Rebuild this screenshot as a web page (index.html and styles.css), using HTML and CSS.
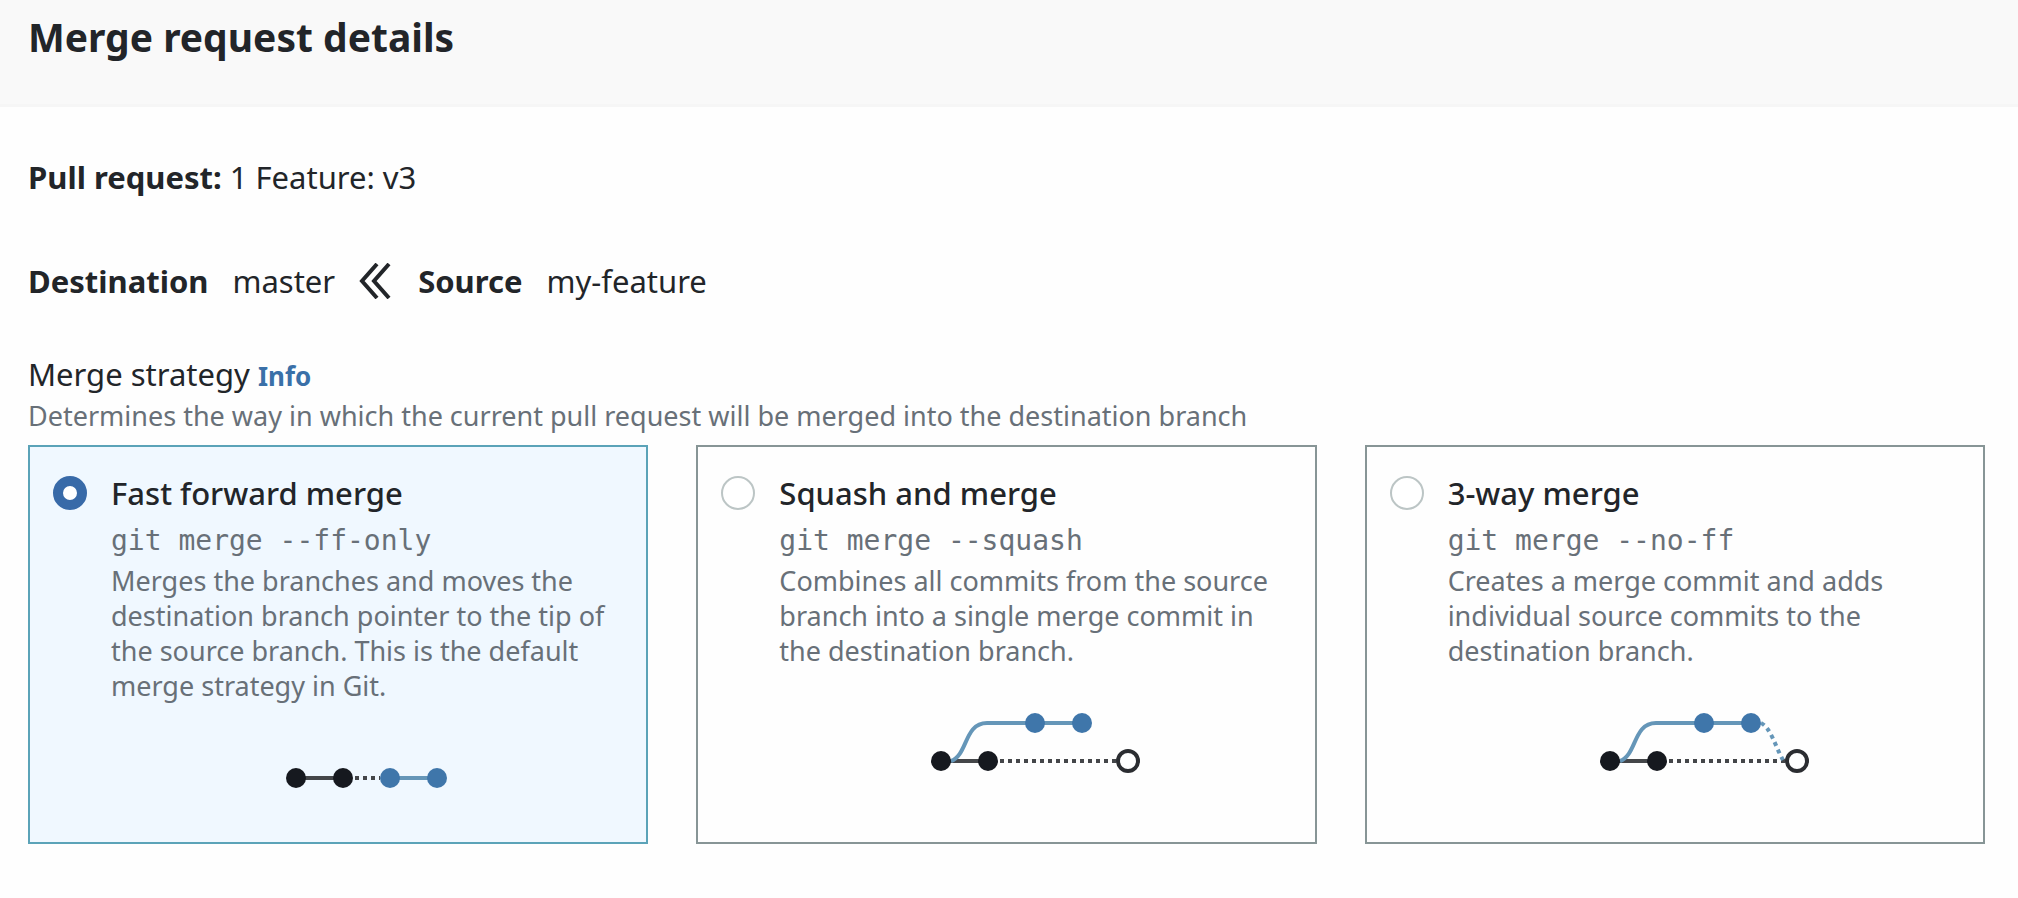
FILE: index.html
```html
<!DOCTYPE html>
<html lang="en">
<head>
<meta charset="utf-8">
<title>Merge request details</title>
<link rel="stylesheet" href="styles.css">
</head>
<body>
<header class="header">
  <h1 class="title">Merge request details</h1>
</header>
<main class="content">
  <p class="pull-request"><strong>Pull request:</strong> 1 Feature: v3</p>
  <div class="branches">
    <strong>Destination</strong>
    <span>master</span>
    <svg class="chevrons" viewBox="0 0 32 36" aria-hidden="true">
      <path d="M18 1 3 18 18 35M30 1 15 18 30 35"/>
    </svg>
    <strong>Source</strong>
    <span>my-feature</span>
  </div>
  <fieldset class="strategy">
    <legend class="legend">Merge strategy <a class="info" href="#">Info</a></legend>
    <p class="hint">Determines the way in which the current pull request will be merged into the destination branch</p>
    <div class="cards">
      <label class="card selected">
        <input class="radio" type="radio" name="strategy" checked>
        <span class="body">
          <span class="name">Fast forward merge</span>
          <code class="command">git merge --ff-only</code>
          <span class="text">Merges the branches and moves the destination branch pointer to the tip of the source branch. This is the default merge strategy in Git.</span>
          <svg class="graph" viewBox="0 0 164 60" width="164" height="60" aria-hidden="true">
            <path class="line dark" d="M11 30H58"/>
            <path class="line dark dotted" d="M70 30H95"/>
            <path class="line blue" d="M105 30H152"/>
            <circle class="dot" cx="11" cy="30" r="10"/>
            <circle class="dot" cx="58" cy="30" r="10"/>
            <circle class="dot blue-dot" cx="105" cy="30" r="10"/>
            <circle class="dot blue-dot" cx="152" cy="30" r="10"/>
          </svg>
        </span>
      </label>
      <label class="card">
        <input class="radio" type="radio" name="strategy">
        <span class="body">
          <span class="name">Squash and merge</span>
          <code class="command">git merge --squash</code>
          <span class="text">Combines all commits from the source branch into a single merge commit in the destination branch.</span>
          <svg class="graph" viewBox="0 0 210 60" width="210" height="60" aria-hidden="true">
            <path class="line dark" d="M11 48H58"/>
            <path class="line dark dotted" d="M70 48H188"/>
            <path class="line blue" d="M21 48C38 42 34 10 57 10H152"/>
            <circle class="dot" cx="11" cy="48" r="10"/>
            <circle class="dot" cx="58" cy="48" r="10"/>
            <circle class="dot blue-dot" cx="105" cy="10" r="10"/>
            <circle class="dot blue-dot" cx="152" cy="10" r="10"/>
            <circle class="ring" cx="198" cy="48" r="10"/>
          </svg>
        </span>
      </label>
      <label class="card">
        <input class="radio" type="radio" name="strategy">
        <span class="body">
          <span class="name">3-way merge</span>
          <code class="command">git merge --no-ff</code>
          <span class="text">Creates a merge commit and adds individual source commits to the destination branch.</span>
          <svg class="graph" viewBox="0 0 210 60" width="210" height="60" aria-hidden="true">
            <path class="line dark" d="M11 48H58"/>
            <path class="line dark dotted" d="M70 48H186"/>
            <path class="line blue" d="M21 48C38 42 34 10 57 10H152"/>
            <path class="line blue dotted" d="M162 10C172 15 176 33 184 47"/>
            <circle class="dot" cx="11" cy="48" r="10"/>
            <circle class="dot" cx="58" cy="48" r="10"/>
            <circle class="dot blue-dot" cx="105" cy="10" r="10"/>
            <circle class="dot blue-dot" cx="152" cy="10" r="10"/>
            <circle class="ring" cx="198" cy="48" r="10"/>
          </svg>
        </span>
      </label>
    </div>
  </fieldset>
</main>
</body>
</html>
```

FILE: styles.css
```css
* {
  box-sizing: border-box;
}

body {
  margin: 0;
  background: #fefefe;
  color: #222529;
  font: 31px/40px "Noto Sans", "Open Sans", sans-serif;
}

.header {
  padding: 13px 28px 43px;
  background: #f9f9f9;
  border-bottom: 3px solid #f6f6f6;
}

.title {
  margin: 0;
  font-size: 39px;
  line-height: 48px;
}

.content {
  padding: 50px 33px 48px 28px;
}

.pull-request {
  margin: 0 0 64px;
}

.branches {
  display: flex;
  align-items: center;
  gap: 24px;
  margin-bottom: 53px;
}

.chevrons {
  width: 32px;
  height: 36px;
  margin-right: 3px;
  fill: none;
  stroke: #222529;
  stroke-width: 4;
}

.strategy {
  min-width: 0;
  margin: 0;
  padding: 0;
  border: 0;
}

.legend {
  padding: 0;
}

.info {
  color: #3a70a8;
  font-size: 26px;
  font-weight: 700;
  text-decoration: none;
}

.hint {
  margin: 2px 0 12px;
}

.hint,
.text {
  color: #687078;
  font-size: 27px;
  line-height: 35px;
}

.cards {
  display: grid;
  grid-template-columns: repeat(3, minmax(0, 1fr));
  gap: 48px;
}

.card {
  display: flex;
  gap: 24px;
  padding: 26px 23px 34px;
  border: 2px solid #879596;
}

.selected {
  border-color: #5ba3b8;
  background: #f0f8ff;
}

.radio {
  appearance: none;
  flex: none;
  width: 34px;
  height: 34px;
  margin: 3px 0 0;
  border: 2px solid #bcc5c5;
  border-radius: 50%;
  background: #fff;
}

.radio:checked {
  border: 10px solid #386aa8;
}

.body {
  display: flex;
  flex: 1;
  flex-direction: column;
  min-width: 0;
}

.name {
  font-weight: 500;
}

.command {
  margin: 8px 0 2px;
  color: #687078;
  font: 28px/40px "DejaVu Sans Mono", monospace;
}

.text {
  margin-bottom: 45px;
}

.graph {
  align-self: center;
  overflow: visible;
}

.line {
  fill: none;
  stroke-width: 4;
}

.dark {
  stroke: #444649;
}

.blue {
  stroke: #6596b8;
}

.dotted {
  stroke-dasharray: 4 4;
}

.dot {
  fill: #16191f;
}

.blue-dot {
  fill: #3f76aa;
}

.ring {
  fill: #fff;
  stroke: #2b2d31;
  stroke-width: 4;
}
```
